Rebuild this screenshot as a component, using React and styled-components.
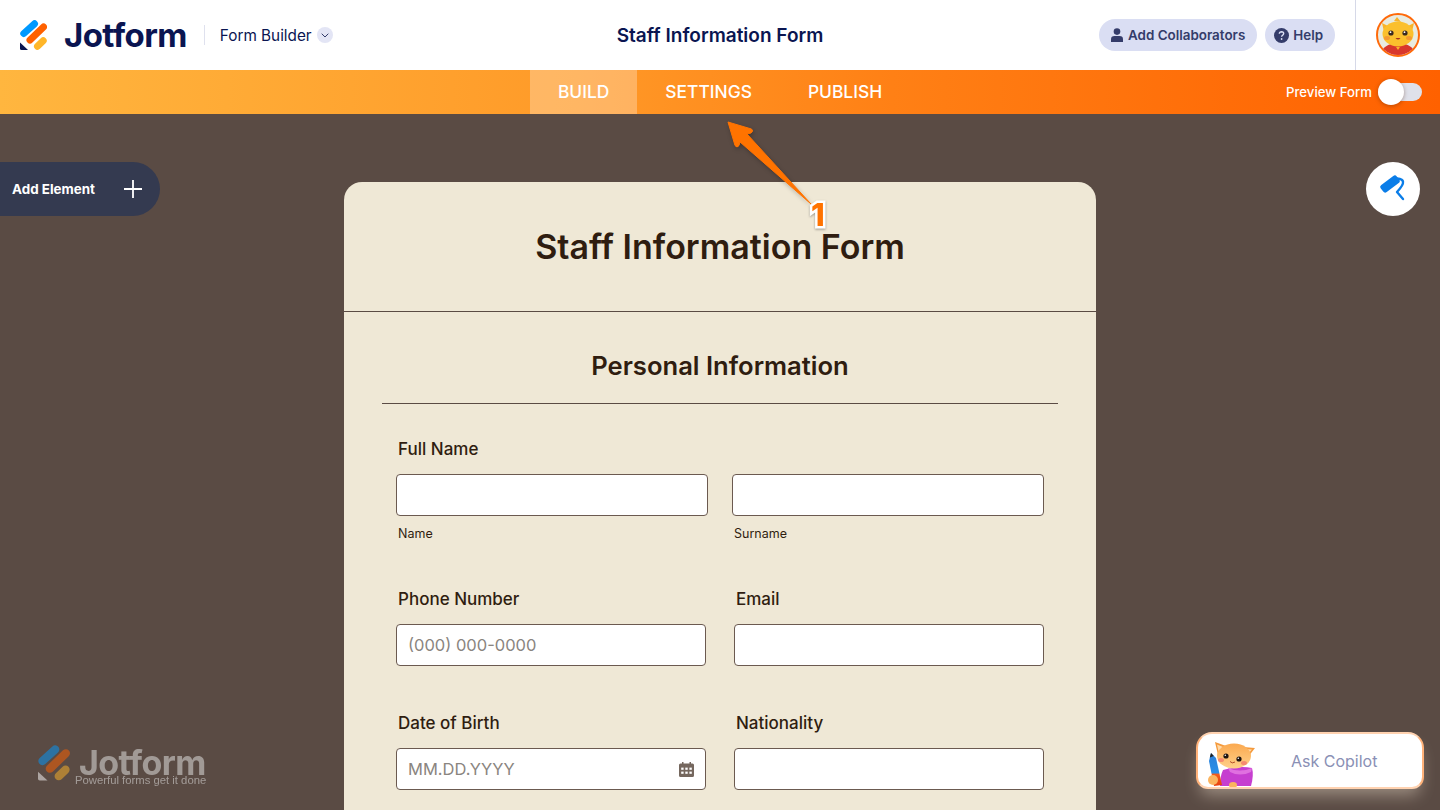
import React from "react";
import styled, { createGlobalStyle } from "styled-components";

const GlobalStyle = createGlobalStyle`
    html, body { margin: 0; padding: 0; background: #5a4b44; }
    * { box-sizing: border-box; }
    body { font-family: "Inter", "Liberation Sans", sans-serif; }
`;

const Page = styled.div`
    position: relative;
    width: 1440px;
    height: 810px;
    overflow: hidden;
    display: flex;
    flex-direction: column;
    background: #5a4b44;
`;

const Header = styled.header`
    height: 70px;
    flex: none;
    background: #fff;
    display: grid;
    grid-template-columns: 1fr auto 1fr;
    align-items: center;
`;

const Brand = styled.div`
    display: flex;
    align-items: center;
    padding-left: 20px;
`;

const Wordmark = styled.span`
    font-family: "Inter", sans-serif;
    font-weight: 700;
    font-size: ${(p) => p.$size}px;
    letter-spacing: -0.6px;
    line-height: 0.75;
    color: ${(p) => p.$color};
`;

const BrandRow = styled.div`
    display: flex;
    align-items: center;
    gap: ${(p) => p.$gap}px;
`;

const Divider = styled.span`
    width: 1px;
    height: 20px;
    background: #dfe1ee;
    margin: 0 15px 0 17px;
`;

const BuilderLabel = styled.span`
    font-size: 15.3px;
    color: #0a1551;
`;

const ChevronBadge = styled.span`
    width: 16px;
    height: 16px;
    margin-left: 5px;
    border-radius: 50%;
    background: #e3e5f5;
    display: flex;
    align-items: center;
    justify-content: center;
`;

const HeaderTitle = styled.h1`
    margin: 0;
    font-size: 19px;
    font-weight: 600;
    color: #0a1551;
`;

const HeaderActions = styled.div`
    height: 70px;
    display: flex;
    align-items: center;
    justify-content: flex-end;
`;

const PillButton = styled.button`
    height: 32px;
    border: 0;
    border-radius: 16px;
    background: #dadef3;
    color: #343c6a;
    font: 600 13.4px "Inter", sans-serif;
    display: flex;
    align-items: center;
    gap: 4px;
    padding: 0 12px 0 ${(p) => p.$left}px;
    margin-right: 8px;
`;

const AvatarCell = styled.div`
    height: 70px;
    width: 85px;
    margin-left: 12px;
    border-left: 1px solid #d6d9e8;
    display: flex;
    align-items: center;
    padding-left: 20px;
`;

const Toolbar = styled.nav`
    position: relative;
    height: 44px;
    flex: none;
    background: linear-gradient(90deg, #ffb63f 0%, #ff9a28 40%, #ff8015 62%, #ff6100 100%);
    display: flex;
    justify-content: center;
`;

const Tab = styled.a`
    height: 44px;
    padding: 0 28px 2px;
    display: flex;
    align-items: center;
    font-size: 17.4px;
    font-weight: 500;
    color: #fff;
    background: ${(p) => (p.$active ? "rgba(255,255,255,0.28)" : "transparent")};
`;

const PreviewToggle = styled.div`
    position: absolute;
    right: 18px;
    top: 9px;
    height: 26px;
    display: flex;
    align-items: center;
    gap: 6px;
    color: #fff;
    font-size: 13.2px;
    font-weight: 500;
`;

const ToggleTrack = styled.span`
    position: relative;
    width: 44px;
    height: 18px;
    border-radius: 9px;
    background: #dfe1ea;
`;

const ToggleKnob = styled.span`
    position: absolute;
    left: 0;
    top: -4px;
    width: 26px;
    height: 26px;
    border-radius: 50%;
    background: #fff;
    box-shadow: 0 1px 4px rgba(80, 30, 0, 0.4);
`;

const Canvas = styled.main`
    flex: 1;
    min-height: 0;
    display: flex;
    justify-content: center;
    padding-top: 68px;
`;

const FormCard = styled.div`
    width: 752px;
    height: 700px;
    flex: none;
    background: #efe8d6;
    border-radius: 18px 18px 0 0;
    color: #2f1d10;
`;

const FormHead = styled.div`
    height: 130px;
    border-bottom: 1px solid #5a4b44;
    padding-top: 47px;
    text-align: center;
`;

const FormTitle = styled.h2`
    margin: 0;
    font-size: 34px;
    line-height: 36px;
    font-weight: 600;
`;

const FormBody = styled.div`
    padding: 0 38px;
`;

const SectionHead = styled.div`
    height: 92px;
    border-bottom: 1px solid #5a4b44;
    padding-top: 36px;
    text-align: center;
`;

const SectionTitle = styled.h3`
    margin: 0;
    font-size: 25.6px;
    line-height: 36px;
    font-weight: 600;
`;

const FieldRow = styled.div`
    display: grid;
    grid-template-columns: ${(p) => p.$cols};
    column-gap: ${(p) => p.$gap}px;
    padding: 0 14px;
    margin-top: ${(p) => p.$top}px;
`;

const FieldLabel = styled.label`
    display: block;
    padding-left: 2px;
    font-size: 17px;
    font-weight: 500;
    line-height: 24px;
    margin-bottom: 13px;
`;

const InputBox = styled.div`
    position: relative;
    height: 42px;
    border: 1px solid #6b5a50;
    border-radius: 4px;
    background: #fff;
    display: flex;
    align-items: center;
    padding: 0 11px;
`;

const TextInput = styled.input`
    flex: 1;
    min-width: 0;
    border: 0;
    outline: 0;
    padding: 0;
    background: transparent;
    font: 400 16.5px "Inter", sans-serif;
    color: #2f1d10;
    &::placeholder { color: #8a8580; opacity: 1; }
`;

const SubLabel = styled.div`
    padding-left: 2px;
    margin-top: 10px;
    font-size: 12.5px;
    line-height: 16px;
`;

const AddElement = styled.button`
    position: absolute;
    left: 0;
    top: 162px;
    width: 160px;
    height: 54px;
    border: 0;
    border-radius: 0 27px 27px 0;
    background: #343a50;
    color: #fff;
    font: 700 13.4px "Inter", sans-serif;
    display: flex;
    align-items: center;
    justify-content: space-between;
    padding: 0 18px 0 12px;
`;

const DesignerButton = styled.button`
    position: absolute;
    left: 1366px;
    top: 162px;
    width: 54px;
    height: 54px;
    padding: 0;
    border: 0;
    border-radius: 50%;
    background: #fff;
    display: flex;
    align-items: center;
    justify-content: center;
`;

const ArrowLayer = styled.svg`
    position: absolute;
    left: 720px;
    top: 114px;
    filter: drop-shadow(1px 2px 2px rgba(0, 0, 0, 0.25));
`;

const StepNumber = styled.span`
    position: absolute;
    left: 811px;
    top: 202px;
    font: 800 31px/26px "Inter", sans-serif;
    color: #ff7300;
    -webkit-text-stroke: 5px #fff;
    paint-order: stroke fill;
    filter: drop-shadow(0 1px 1px rgba(0, 0, 0, 0.35));
`;

const Watermark = styled.div`
    position: absolute;
    left: 38px;
    top: 745px;
    width: 170px;
    opacity: 0.5;
    filter: blur(0.4px);
`;

const WatermarkTagline = styled.div`
    position: absolute;
    left: 37px;
    top: 30px;
    font: 400 11.3px/11px "Liberation Sans", sans-serif;
    color: #e8e8e8;
    white-space: nowrap;
`;

const CopilotBox = styled.div`
    position: absolute;
    left: 1196px;
    top: 732px;
    width: 228px;
    height: 57px;
    border: 2px solid #ffd2b0;
    border-left-color: #ffb27a;
    border-right-color: #ffb27a;
    border-radius: 16px 16px 12px 12px;
    background: #fff;
    box-shadow: 0 10px 16px -4px rgba(255, 240, 220, 0.4);
    display: flex;
    align-items: center;
    padding: 0 0 0 8px;
`;

const CopilotCatSlot = styled.div`
    align-self: flex-end;
    height: 46px;
`;

const CopilotText = styled.span`
    margin-left: 35px;
    font-size: 16px;
    color: #8a90b5;
`;

const Logo = ({ size, corner }) => (
    <svg width={size} height={size * 30 / 27} viewBox="0 0 27 30">
        <g fill="none" strokeLinecap="round" strokeWidth="7">
            <path d="M3.8 13.5 L14.5 3.8" stroke="#0099ff" />
            <path d="M10 20 L23.5 7" stroke="#ff6100" />
            <path d="M17.5 26.3 L23.2 20.8" stroke="#ffb629" />
        </g>
        <path d="M0 22.5 L8 30 L1.5 30 Q0 30 0 28.5 Z" fill={corner} />
    </svg>
);

const AvatarCat = () => (
    <svg width="44" height="44" viewBox="0 0 44 44">
        <defs>
            <clipPath id="avatarClip"><circle cx="22" cy="22" r="20" /></clipPath>
        </defs>
        <circle cx="22" cy="22" r="21" fill="#e9ebe0" stroke="#ff6a0a" strokeWidth="2" />
        <g clipPath="url(#avatarClip)">
            <path d="M4 44 Q5 31 22 30 Q39 31 40 44 Z" fill="#d8372c" />
            <path d="M6 10 L14 14 L9 23 Z M38 10 L30 14 L35 23 Z M18 8 L21 4 L25 9 Z" fill="#f9b32a" />
            <ellipse cx="22" cy="21" rx="15.5" ry="12.5" fill="#fbc02d" />
            <circle cx="15" cy="20" r="2.6" fill="#3a2a20" />
            <circle cx="29" cy="20" r="2.6" fill="#3a2a20" />
            <circle cx="14.5" cy="19.2" r="0.9" fill="#fff" />
            <circle cx="28.5" cy="19.2" r="0.9" fill="#fff" />
            <ellipse cx="11" cy="25" rx="3" ry="2" fill="#f59a32" />
            <ellipse cx="33" cy="25" rx="3" ry="2" fill="#f59a32" />
            <path d="M19.5 25 Q22 28 24.5 25" fill="#a3321f" />
            <path d="M20 34 L22 37 L24 34 Z" fill="#f9b32a" />
        </g>
    </svg>
);

const CopilotCat = () => (
    <svg width="50" height="46" viewBox="0 0 50 46">
        <defs>
            <linearGradient id="copilotFur" x1="0" y1="0" x2="0" y2="1">
                <stop offset="0" stopColor="#fba94f" />
                <stop offset="1" stopColor="#ffd08a" />
            </linearGradient>
            <linearGradient id="copilotPencil" x1="0" y1="0" x2="0" y2="1">
                <stop offset="0" stopColor="#2b7fd8" />
                <stop offset="0.6" stopColor="#2b8fe8" />
                <stop offset="0.65" stopColor="#f25b1c" />
                <stop offset="1" stopColor="#e8400f" />
            </linearGradient>
        </defs>
        <path d="M17 29 Q34 24 46 27 Q48 34 45 45 L14 45 Q14 35 17 29 Z" fill="#c63fd0" />
        <path d="M22 27 Q34 32 46 27 L45 31 Q34 36 24 31 Z" fill="#e070e0" />
        <path d="M3 20 L5 12 L10 17 L16 44 L8 45 Z" fill="url(#copilotPencil)" />
        <path d="M3.8 16.5 L5 12 L7.8 15 Z" fill="#222" />
        <path d="M9 1 L20 5 L12 14 Z M49 7 L37 6 L42 16 Z" fill="#f59a3c" />
        <path d="M11 3.5 L17 6 L12.5 10.5 Z M46 8.5 L39 8 L42 13 Z" fill="#ffd9a8" />
        <ellipse cx="28" cy="15" rx="17" ry="12.5" fill="url(#copilotFur)" />
        <circle cx="20" cy="15" r="2.6" fill="#1e1410" />
        <circle cx="33" cy="18" r="2.6" fill="#1e1410" />
        <circle cx="19.3" cy="14.2" r="0.8" fill="#fff" />
        <circle cx="32.3" cy="17.2" r="0.8" fill="#fff" />
        <ellipse cx="15" cy="19" rx="3" ry="2" fill="#f58a70" />
        <ellipse cx="38" cy="22" rx="3" ry="2" fill="#f58a70" />
        <path d="M24 20.5 Q26 23 29 21" fill="none" stroke="#b3502a" strokeWidth="1" />
        <ellipse cx="7" cy="39" rx="5" ry="5" fill="#fbb45f" />
        <ellipse cx="27" cy="44" rx="4" ry="3" fill="#fbb45f" />
    </svg>
);

const PersonIcon = () => (
    <svg width="14" height="14" viewBox="0 0 14 14" fill="#343c6a">
        <circle cx="7" cy="3.6" r="3.3" />
        <path d="M1 14 V11.3 Q1 8 4.5 8 H9.5 Q13 8 13 11.3 V14 Z" />
    </svg>
);

const HelpIcon = () => (
    <svg width="15" height="15" viewBox="0 0 15 15">
        <circle cx="7.5" cy="7.5" r="7.5" fill="#343c6a" />
        <path d="M5.3 5.8 Q5.5 3.8 7.6 3.8 Q9.7 3.9 9.7 5.6 Q9.7 6.7 8.5 7.3 Q7.6 7.8 7.6 8.8" fill="none" stroke="#dadef3" strokeWidth="1.4" />
        <circle cx="7.6" cy="11" r="0.9" fill="#dadef3" />
    </svg>
);

const RollerIcon = () => (
    <svg width="28" height="28" viewBox="-2 -2 28 28">
        <rect x="-1" y="2.5" width="20" height="9" rx="2.5" transform="rotate(-37 9 7)" fill="#0a7de8" />
        <path d="M16 1.5 Q22 2 22 5 Q22.5 8 16 15 L22 22" fill="none" stroke="#0a7de8" strokeWidth="2.4" strokeLinecap="round" strokeLinejoin="round" />
    </svg>
);

const CalendarIcon = () => (
    <svg width="15" height="15" viewBox="0 0 15 15" fill="#75675e">
        <path d="M3 0 H4.5 V1.5 H10.5 V0 H12 V1.5 H13.5 Q15 1.5 15 3 V13.5 Q15 15 13.5 15 H1.5 Q0 15 0 13.5 V3 Q0 1.5 1.5 1.5 H3 Z" />
        <g fill="#fff">
            <rect x="2.2" y="5.6" width="2.4" height="2.2" />
            <rect x="6.3" y="5.6" width="2.4" height="2.2" />
            <rect x="10.4" y="5.6" width="2.4" height="2.2" />
            <rect x="2.2" y="9.6" width="2.4" height="2.2" />
            <rect x="6.3" y="9.6" width="2.4" height="2.2" />
            <rect x="10.4" y="9.6" width="2.4" height="2.2" />
        </g>
    </svg>
);

const App = () => {
    return (
        <Page>
            <GlobalStyle />
            <Header>
                <Brand>
                    <BrandRow $gap={17}>
                        <Logo size={27} corner="#0a1551" />
                        <Wordmark $size={33} $color="#0a1551">Jotform</Wordmark>
                    </BrandRow>
                    <Divider />
                    <BuilderLabel>Form Builder</BuilderLabel>
                    <ChevronBadge>
                        <svg width="8" height="5" viewBox="0 0 8 5">
                            <path d="M0.7 0.7 L4 4 L7.3 0.7" fill="none" stroke="#343c6a" strokeWidth="1" />
                        </svg>
                    </ChevronBadge>
                </Brand>
                <HeaderTitle>Staff Information Form</HeaderTitle>
                <HeaderActions>
                    <PillButton $left={11}><PersonIcon />Add Collaborators</PillButton>
                    <PillButton $left={9}><HelpIcon />Help</PillButton>
                    <AvatarCell><AvatarCat /></AvatarCell>
                </HeaderActions>
            </Header>

            <Toolbar>
                <Tab $active>BUILD</Tab>
                <Tab>SETTINGS</Tab>
                <Tab>PUBLISH</Tab>
                <PreviewToggle>
                    Preview Form
                    <ToggleTrack><ToggleKnob /></ToggleTrack>
                </PreviewToggle>
            </Toolbar>

            <Canvas>
                <FormCard>
                    <FormHead>
                        <FormTitle>Staff Information Form</FormTitle>
                    </FormHead>
                    <FormBody>
                        <SectionHead>
                            <SectionTitle>Personal Information</SectionTitle>
                        </SectionHead>

                        <FieldRow $cols="312px 312px" $gap={24} $top={33}>
                            <div>
                                <FieldLabel>Full Name</FieldLabel>
                                <InputBox><TextInput /></InputBox>
                                <SubLabel>Name</SubLabel>
                            </div>
                            <div>
                                <FieldLabel>&nbsp;</FieldLabel>
                                <InputBox><TextInput /></InputBox>
                                <SubLabel>Surname</SubLabel>
                            </div>
                        </FieldRow>

                        <FieldRow $cols="310px 310px" $gap={28} $top={45}>
                            <div>
                                <FieldLabel>Phone Number</FieldLabel>
                                <InputBox><TextInput placeholder="(000) 000-0000" /></InputBox>
                            </div>
                            <div>
                                <FieldLabel>Email</FieldLabel>
                                <InputBox><TextInput /></InputBox>
                            </div>
                        </FieldRow>

                        <FieldRow $cols="310px 310px" $gap={28} $top={45}>
                            <div>
                                <FieldLabel>Date of Birth</FieldLabel>
                                <InputBox>
                                    <TextInput placeholder="MM.DD.YYYY" />
                                    <CalendarIcon />
                                </InputBox>
                            </div>
                            <div>
                                <FieldLabel>Nationality</FieldLabel>
                                <InputBox><TextInput /></InputBox>
                            </div>
                        </FieldRow>
                    </FormBody>
                </FormCard>
            </Canvas>

            <AddElement>
                Add Element
                <svg width="18" height="18" viewBox="0 0 18 18">
                    <path d="M9 0 V18 M0 9 H18" stroke="#fff" strokeWidth="1.8" />
                </svg>
            </AddElement>

            <DesignerButton><RollerIcon /></DesignerButton>

            <ArrowLayer width="100" height="100" viewBox="0 0 100 100">
                <path
                    d="M8 8 L31.5 15 Q34 17 31 19 L27 20 L91 90 L20 28 L19 31.5 Q17 34.5 15 31.5 Z"
                    fill="#ff7300"
                    stroke="#ff7300"
                    strokeWidth="1"
                    strokeLinejoin="round"
                />
            </ArrowLayer>
            <StepNumber>1</StepNumber>

            <Watermark>
                <BrandRow $gap={9}>
                    <Logo size={32} corner="#ffffff" />
                    <Wordmark $size={34} $color="#e8e8e8">Jotform</Wordmark>
                </BrandRow>
                <WatermarkTagline>Powerful forms get it done</WatermarkTagline>
            </Watermark>

            <CopilotBox>
                <CopilotCatSlot><CopilotCat /></CopilotCatSlot>
                <CopilotText>Ask Copilot</CopilotText>
            </CopilotBox>
        </Page>
    );
};

export default App;
